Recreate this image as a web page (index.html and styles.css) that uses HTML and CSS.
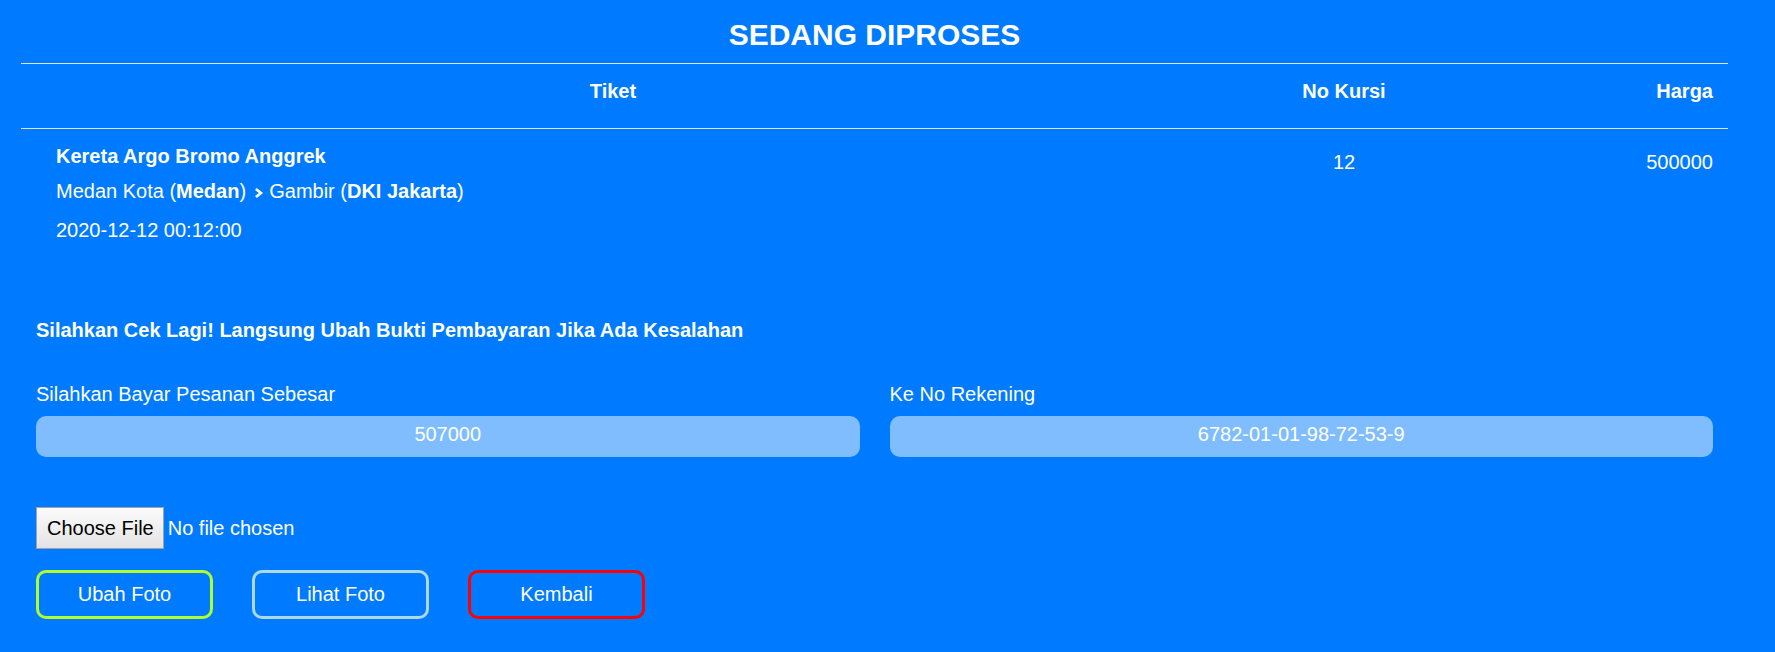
FILE: index.html
```html
<!DOCTYPE html>
<html lang="id">
<head>
<meta charset="utf-8">
<title>Sedang Diproses</title>
<link rel="stylesheet" href="styles.css">
</head>
<body>
<div class="container">
  <h2 class="title">SEDANG DIPROSES</h2>
  <div class="ticket-table">
    <div class="th th-ticket">Tiket</div>
    <div class="th th-seat">No Kursi</div>
    <div class="th th-price">Harga</div>

    <div class="td td-ticket">
      <div class="train">Kereta Argo Bromo Anggrek</div>
      <div class="route">Medan Kota (<b>Medan</b>) <svg class="chev" width="12" height="12" viewBox="0 0 12 12"><path d="M3.9 1 L8.9 5 L3.9 9" fill="none" stroke="#fff" stroke-width="2.7"/></svg> Gambir (<b>DKI Jakarta</b>)</div>
      <div class="date">2020-12-12 00:12:00</div>
    </div>
    <div class="td td-seat">12</div>
    <div class="td td-price">500000</div>
  </div>

  <div class="pay">
    <p class="notice">Silahkan Cek Lagi! Langsung Ubah Bukti Pembayaran Jika Ada Kesalahan</p>
    <div class="fields">
      <div class="field">
        <label class="field-label">Silahkan Bayar Pesanan Sebesar</label>
        <div class="field-box">507000</div>
      </div>
      <div class="field">
        <label class="field-label">Ke No Rekening</label>
        <div class="field-box">6782-01-01-98-72-53-9</div>
      </div>
    </div>

    <div class="file-row">
      <label class="file-btn">Choose File<input type="file" class="file-input"></label>
      <span class="file-name">No file chosen</span>
    </div>

    <div class="actions">
      <button class="btn btn-green">Ubah Foto</button>
      <button class="btn btn-light">Lihat Foto</button>
      <button class="btn btn-red">Kembali</button>
    </div>
  </div>
</div>
</body>
</html>
```

FILE: styles.css
```css
html, body {
  margin: 0;
  padding: 0;
}

body {
  background: #007bff;
  color: #fff;
  font-family: "Liberation Sans", Arial, sans-serif;
  font-size: 20px;
  height: 652px;
  overflow: hidden;
}

.container {
  margin-left: 21px;
  width: 1707px;
}

.title {
  margin: 17px 0 10px;
  font-size: 30px;
  line-height: 36px;
  font-weight: bold;
  text-align: center;
}

.ticket-table {
  display: grid;
  grid-template-columns: 1184px 278px 1fr;
}

.th {
  font-weight: bold;
  line-height: 30px;
  padding: 12px 15px 22px;
  border-top: 1px solid #dee2e6;
  border-bottom: 1px solid #dee2e6;
}

.th-ticket, .th-seat { text-align: center; }
.th-price { text-align: right; }

.td {
  line-height: 30px;
  padding: 18px 15px 0;
}

.td-ticket {
  padding-left: 35px;
}

.td-seat { text-align: center; }
.td-price { text-align: right; }

.train {
  font-weight: bold;
  line-height: 18px;
}

.route {
  margin-top: 11px;
}

.chev {
  vertical-align: -2px;
}

.date {
  margin-top: 9px;
}

.pay {
  padding: 0 15px;
}

.notice {
  margin: 70px 0 0;
  font-weight: bold;
  line-height: 30px;
}

.fields {
  display: grid;
  grid-template-columns: 1fr 1fr;
  column-gap: 30px;
  margin-top: 34px;
}

.field-label {
  display: block;
  line-height: 30px;
}

.field-box {
  margin-top: 7px;
  background: #80bdff;
  border-radius: 10px;
  text-align: center;
  line-height: 30px;
  padding: 3px 0 8px;
}

.file-row {
  display: flex;
  align-items: center;
  margin-top: 50px;
}

.file-btn {
  box-sizing: border-box;
  height: 42px;
  line-height: 40px;
  padding: 0 9px 0 10px;
  border: 1px solid #a3a3a3;
  background: linear-gradient(#fbfbfb, #e3e3e3);
  color: #000;
  cursor: pointer;
}

.file-input {
  display: none;
}

.file-name {
  margin-left: 4px;
  line-height: 40px;
}

.actions {
  display: flex;
  gap: 39px;
  margin-top: 21px;
}

.btn {
  box-sizing: border-box;
  width: 177px;
  height: 49px;
  border: 3px solid;
  border-radius: 10px;
  background: transparent;
  color: #fff;
  font-family: inherit;
  font-size: 20px;
  line-height: 43px;
  padding: 0;
}

.btn-green { border-color: #adff2f; }
.btn-light { border-color: #add8e6; }
.btn-red { border-color: #ff0000; }
```
